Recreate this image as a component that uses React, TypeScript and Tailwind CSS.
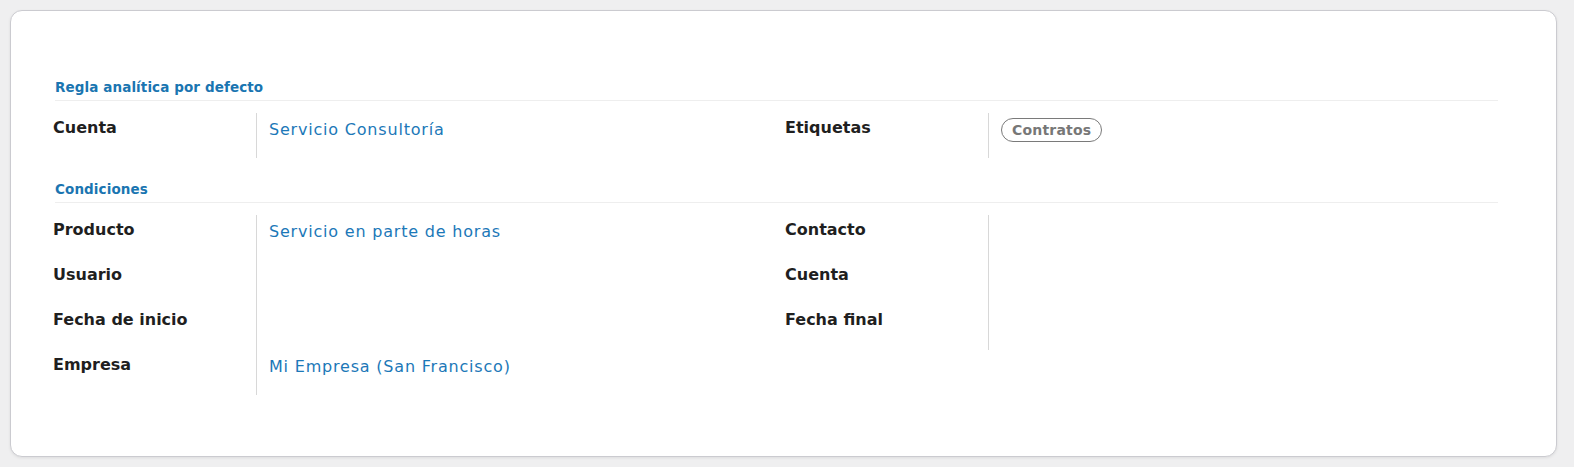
const font = { fontFamily: '"DejaVu Sans", "Noto Sans", sans-serif' };

type Row = { label: string; value?: string; tag?: string };

function Group({ rows }: { rows: Row[] }) {
  return (
    <div className="grid grid-cols-[203px_1fr] content-start">
      {rows.map((row) => (
        <div key={row.label} className="contents">
          <div className="h-[45px] pt-[3px] text-[16px] font-bold leading-[24px] text-[#1f1f1f]">{row.label}</div>
          <div className="h-[45px] border-l border-[#d8d8d8] pl-3 pt-[5px] leading-[24px]">
            {row.value && <span className="text-[16px] tracking-[0.8px] text-[#1c78b8]">{row.value}</span>}
            {row.tag && (
              <span className="-mt-px inline-flex h-[24px] items-center rounded-full border border-[#7a7a7a] px-[10px] text-[14px] font-bold tracking-[0.2px] text-[#777777]">
                {row.tag}
              </span>
            )}
          </div>
        </div>
      ))}
    </div>
  );
}

function Section({ title, left, right, first }: { title: string; left: Row[]; right: Row[]; first?: boolean }) {
  return (
    <section className={first ? '' : 'mt-[21px]'}>
      <div className="mb-3 mr-[58px] ml-[2px] border-b border-[#eeeeee] pb-[3px] text-[13.5px] font-bold leading-[20px] tracking-[0.1px] text-[#1a75b1]">
        {title}
      </div>
      <div className="grid grid-cols-[732px_1fr] items-start">
        <Group rows={left} />
        <Group rows={right} />
      </div>
    </section>
  );
}

export default function App() {
  return (
    <div className="min-h-[467px] bg-[#efeff0] px-[10px] pt-[10px] pb-[10px]" style={font}>
      <div className="h-[447px] w-[1547px] rounded-[12px] border border-[#cbcbd0] bg-white pt-[66px] pl-[42px] shadow-[0_1px_3px_rgba(0,0,0,0.08)]">
        <Section
          first
          title="Regla analítica por defecto"
          left={[{ label: 'Cuenta', value: 'Servicio Consultoría' }]}
          right={[{ label: 'Etiquetas', tag: 'Contratos' }]}
        />
        <Section
          title="Condiciones"
          left={[
            { label: 'Producto', value: 'Servicio en parte de horas' },
            { label: 'Usuario' },
            { label: 'Fecha de inicio' },
            { label: 'Empresa', value: 'Mi Empresa (San Francisco)' },
          ]}
          right={[{ label: 'Contacto' }, { label: 'Cuenta' }, { label: 'Fecha final' }]}
        />
      </div>
    </div>
  );
}
